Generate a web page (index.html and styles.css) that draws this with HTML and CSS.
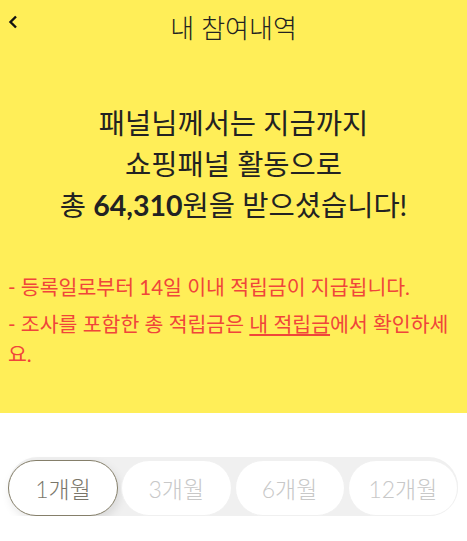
FILE: index.html
```html
<!DOCTYPE html>
<html lang="ko">
<head>
    <meta charset="UTF-8">
    <meta name="viewport" content="width=device-width, initial-scale=1.0">
    <title>내 참여내역</title>
    <link rel="stylesheet" href="styles.css">
</head>
<body>
    <div class="top">
        <div class="header">
            <a class="back" href="#">
                <svg width="10" height="14" viewBox="0 0 10 14"><path d="M8 1.5 L2.5 7 L8 12.5" fill="none" stroke="#111" stroke-width="2.4"/></svg>
            </a>
            <h1>내 참여내역</h1>
        </div>
        <p class="summary">
            패널님께서는 지금까지<br>
            쇼핑패널 활동으로<br>
            총 <strong>64,310</strong>원을 받으셨습니다!
        </p>
        <ul class="notes">
            <li>- 등록일로부터 14일 이내 적립금이 지급됩니다.</li>
            <li>- 조사를 포함한 총 적립금은 <a href="#">내 적립금</a>에서 확인하세요.</li>
        </ul>
    </div>
    <div class="tabs">
        <button class="tab active">1개월</button>
        <button class="tab">3개월</button>
        <button class="tab">6개월</button>
        <button class="tab">12개월</button>
    </div>
</body>
</html>
```

FILE: styles.css
```css
body {
    margin: 0;
    font-family: Lato, "Noto Sans CJK KR", sans-serif;
    background: #fff;
}
.top {
    background-color: #ffee58;
    height: 413px;
    box-sizing: border-box;
    padding: 0 8px;
}
.header {
    position: relative;
    height: 52px;
    text-align: center;
}
.back {
    position: absolute;
    left: 0;
    top: 13px;
}
.header h1 {
    margin: 0;
    padding-top: 8px;
    font-size: 26px;
    font-weight: 300;
    color: #222;
}
.summary {
    margin: 51px 0 0;
    text-align: center;
    font-size: 28.5px;
    line-height: 41px;
    color: #222;
}
.summary strong {
    font-weight: 700;
}
.notes {
    list-style: none;
    margin: 46px 0 0;
    padding: 0;
    color: #f0453a;
    font-size: 20.5px;
    line-height: 30px;
}
.notes li {
    margin-bottom: 7px;
}
.notes a {
    color: inherit;
}
.tabs {
    display: flex;
    gap: 3px;
    margin: 44px 9px 0 8px;
    background: #f0f0f0;
    border-radius: 30px;
    padding: 3px 0 0;
    height: 56px;
}
.tab {
    flex: 1;
    height: 56px;
    border: 1px solid #f0f0f0;
    border-radius: 28px;
    background: #fff;
    font-family: inherit;
    font-size: 23px;
    font-weight: 300;
    color: #c8c8c8;
}
.tab.active {
    border-color: #857f6a;
    color: #7a766a;
    box-shadow: 2px 4px 10px rgba(0, 0, 0, 0.1);
}
```
